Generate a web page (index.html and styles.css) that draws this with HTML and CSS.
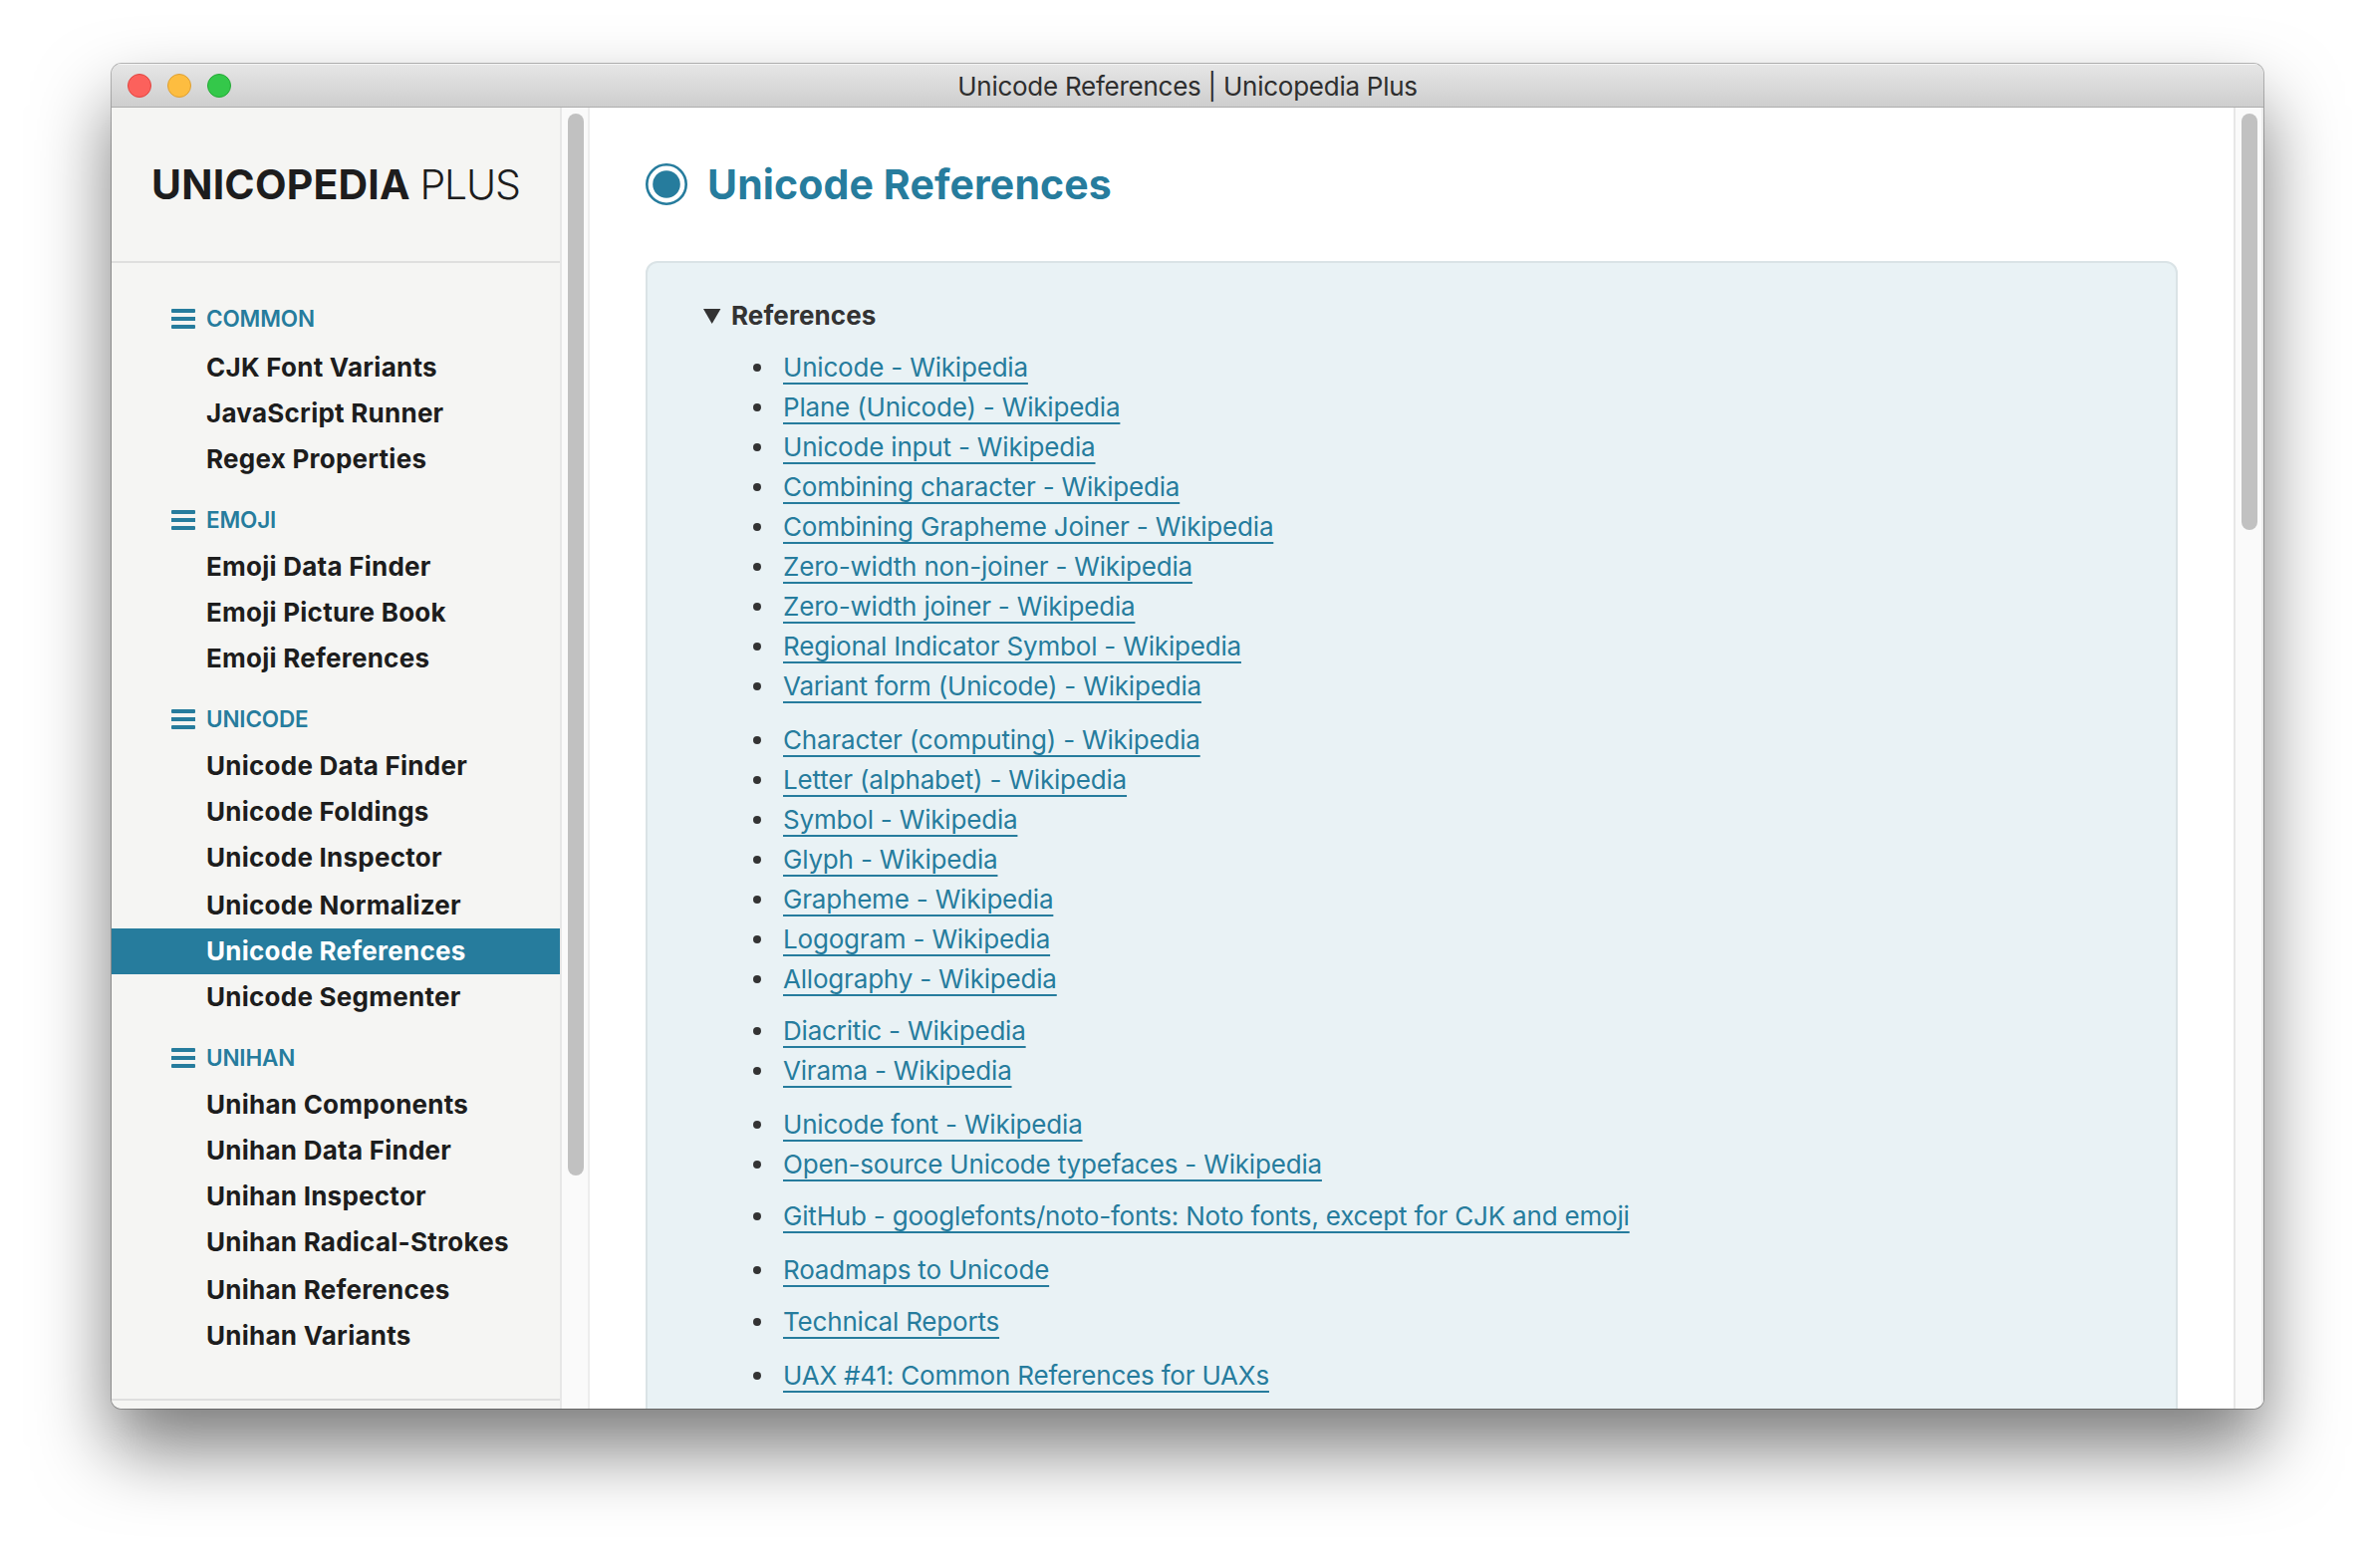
FILE: index.html
```html
<!DOCTYPE html>
<html lang="en">
<head>
<meta charset="utf-8">
<title>Unicode References | Unicopedia Plus</title>
<link rel="stylesheet" href="styles.css">
</head>
<body>
<div class="window">
  <header class="titlebar">
    <div class="lights"><span class="light close"></span><span class="light minimize"></span><span class="light maximize"></span></div>
    <div class="window-title"><span>Unicode References | Unicopedia Plus</span></div>
  </header>
  <div class="body">
    <aside class="sidebar">
      <div class="brand"><b>UNICOPEDIA</b> <span>PLUS</span></div>
      <nav class="nav">
        <h2 class="category"><i class="bars"></i><span>COMMON</span></h2>
        <a class="item"><span>CJK Font Variants</span></a>
        <a class="item"><span>JavaScript Runner</span></a>
        <a class="item"><span>Regex Properties</span></a>
        <h2 class="category"><i class="bars"></i><span>EMOJI</span></h2>
        <a class="item"><span>Emoji Data Finder</span></a>
        <a class="item"><span>Emoji Picture Book</span></a>
        <a class="item"><span>Emoji References</span></a>
        <h2 class="category"><i class="bars"></i><span>UNICODE</span></h2>
        <a class="item"><span>Unicode Data Finder</span></a>
        <a class="item"><span>Unicode Foldings</span></a>
        <a class="item"><span>Unicode Inspector</span></a>
        <a class="item spaced"><span>Unicode Normalizer</span></a>
        <a class="item active"><span>Unicode References</span></a>
        <a class="item"><span>Unicode Segmenter</span></a>
        <h2 class="category"><i class="bars"></i><span>UNIHAN</span></h2>
        <a class="item"><span>Unihan Components</span></a>
        <a class="item"><span>Unihan Data Finder</span></a>
        <a class="item"><span>Unihan Inspector</span></a>
        <a class="item"><span>Unihan Radical-Strokes</span></a>
        <a class="item spaced"><span>Unihan References</span></a>
        <a class="item"><span>Unihan Variants</span></a>
      </nav>
    </aside>
    <div class="scrollbar side"><div class="thumb"></div></div>
    <main class="main">
      <h1 class="heading">
        <svg class="radio" width="42" height="42" viewBox="0 0 42 42"><circle cx="21" cy="21" r="19.7" fill="none" stroke="currentColor" stroke-width="2.6"/><circle cx="21" cy="21" r="13.8" fill="currentColor"/></svg>
        <span>Unicode References</span>
      </h1>
      <section class="panel">
        <div class="summary"><svg width="18" height="15" viewBox="0 0 18 15"><path d="M0 0H17.4L8.7 15Z" fill="currentColor"/></svg><span>References</span></div>
        <div class="lists">
          <ul>
            <li><a>Unicode - Wikipedia</a></li>
            <li><a>Plane (Unicode) - Wikipedia</a></li>
            <li><a>Unicode input - Wikipedia</a></li>
            <li><a>Combining character - Wikipedia</a></li>
            <li><a>Combining Grapheme Joiner - Wikipedia</a></li>
            <li><a>Zero-width non-joiner - Wikipedia</a></li>
            <li><a>Zero-width joiner - Wikipedia</a></li>
            <li><a>Regional Indicator Symbol - Wikipedia</a></li>
            <li><a>Variant form (Unicode) - Wikipedia</a></li>
          </ul>
          <ul>
            <li><a>Character (computing) - Wikipedia</a></li>
            <li><a>Letter (alphabet) - Wikipedia</a></li>
            <li><a>Symbol - Wikipedia</a></li>
            <li><a>Glyph - Wikipedia</a></li>
            <li><a>Grapheme - Wikipedia</a></li>
            <li><a>Logogram - Wikipedia</a></li>
            <li><a>Allography - Wikipedia</a></li>
          </ul>
          <ul>
            <li><a>Diacritic - Wikipedia</a></li>
            <li><a>Virama - Wikipedia</a></li>
          </ul>
          <ul>
            <li><a>Unicode font - Wikipedia</a></li>
            <li><a>Open-source Unicode typefaces - Wikipedia</a></li>
          </ul>
          <ul><li><a>GitHub - googlefonts/noto-fonts: Noto fonts, except for CJK and emoji</a></li></ul>
          <ul><li><a>Roadmaps to Unicode</a></li></ul>
          <ul><li><a>Technical Reports</a></li></ul>
          <ul><li><a>UAX #41: Common References for UAXs</a></li></ul>
        </div>
      </section>
    </main>
    <div class="scrollbar page"><div class="thumb"></div></div>
  </div>
</div>
</body>
</html>
```
FILE: styles.css
```css
* { box-sizing: border-box; }
html, body { margin: 0; height: 100%; }
body {
  padding: 64px 112px 0;
  background: #fff;
  font-family: Inter, "Liberation Sans", sans-serif;
  font-size: 26px;
  color: #333;
  overflow: hidden;
}
.window {
  width: 2160px;
  height: 1350px;
  border-radius: 10px;
  overflow: hidden;
  display: flex;
  flex-direction: column;
  background: #fff;
  box-shadow: 0 0 0 1px rgba(0, 0, 0, .27), 0 40px 74px rgba(0, 0, 0, .52);
}
.titlebar {
  flex: none;
  height: 44px;
  display: grid;
  grid-template-columns: 200px 1fr 200px;
  align-items: center;
  background: linear-gradient(#e6e6e6, #cecece);
  border-bottom: 1px solid #adadad;
  box-shadow: inset 0 1px 0 #f4f4f4;
}
.lights { display: flex; gap: 16px; padding-left: 16px; }
.light { width: 24px; height: 24px; border-radius: 50%; border: 1px solid; }
.close { background: #fc615c; border-color: #e0443f; }
.minimize { background: #fdbd40; border-color: #dd9f33; }
.maximize { background: #34c84a; border-color: #25a936; }
.window-title { padding-top: 2px; text-align: center; line-height: 42px; letter-spacing: -.26px; color: #2e2e2e; }
.body { flex: 1; min-height: 0; display: flex; }
.sidebar { width: 450px; flex: none; background: #f5f5f3; overflow: hidden; }
.brand {
  height: 156px;
  padding-left: 40px;
  border-bottom: 2px solid #dfdfde;
  font-size: 41px;
  line-height: 154px;
  white-space: nowrap;
  color: #1d1d1d;
}
.brand b { font-weight: 700; letter-spacing: .2px; }
.brand span { font-weight: 300; letter-spacing: -1.2px; margin-left: -2px; }
.nav { padding: 20px 0 40px; border-bottom: 2px solid #dfdfde; }
.category {
  margin: 0;
  height: 62px;
  padding: 16px 0 0 60px;
  display: flex;
  gap: 11px;
  font-size: 22.5px;
  line-height: 44px;
  font-weight: 600;
  letter-spacing: -.15px;
  color: #267c9d;
}
.category:first-child { padding-top: 14px; }
.bars {
  width: 24px;
  height: 20px;
  margin-top: 12px;
  display: flex;
  flex-direction: column;
  justify-content: space-between;
  background: linear-gradient(currentColor, currentColor) 0 8px / 24px 4px no-repeat;
}
.bars::before, .bars::after { content: ""; height: 4px; border-radius: 1px; background: currentColor; }
.item {
  display: block;
  height: 46px;
  padding-left: 95px;
  line-height: 46px;
  font-weight: 700;
  letter-spacing: .25px;
  color: #1d1d1d;
  white-space: nowrap;
}
.item.spaced { margin-top: 2px; }
.item.active { background: #267c9d; color: #fff; }
.scrollbar { flex: none; width: 30px; padding: 6px 0 0 6px; background: #fafafa; border-left: 2px solid #e7e7e7; border-right: 2px solid #ededed; }
.thumb { width: 16px; border-radius: 8px; background: #c1c1c1; }
.side .thumb { height: 1066px; }
.page .thumb { height: 418px; }
.main { flex: 1; min-width: 0; padding: 0 56px; overflow: hidden; }
.heading {
  margin: 0;
  height: 154px;
  display: flex;
  align-items: center;
  gap: 20px;
  font-size: 41px;
  font-weight: 700;
  letter-spacing: .12px;
  color: #267c9d;
}
.panel {
  height: 1400px;
  padding: 33px 56px;
  background: #e9f2f5;
  border: 2px solid #dae3e6;
  border-radius: 12px;
}
.summary { display: flex; align-items: center; gap: 10px; height: 40px; line-height: 40px; font-weight: 700; letter-spacing: .1px; }
.lists { padding-top: 12px; }
.lists ul { margin: 0; padding: 0; list-style: none; }
.lists ul:nth-child(even) { margin-top: 14px; }
.lists ul:nth-child(odd):not(:first-child) { margin-top: 12px; }
.lists li { height: 40px; display: flex; align-items: center; gap: 22px; padding-left: 50px; line-height: 40px; }
.lists li::before { content: ""; width: 8px; height: 8px; border-radius: 50%; background: #333; }
.lists a {
  color: #267c9d;
  letter-spacing: -.19px;
  text-decoration: underline 2px;
  text-underline-offset: 6px;
  text-decoration-skip-ink: none;
  white-space: nowrap;
}
```
